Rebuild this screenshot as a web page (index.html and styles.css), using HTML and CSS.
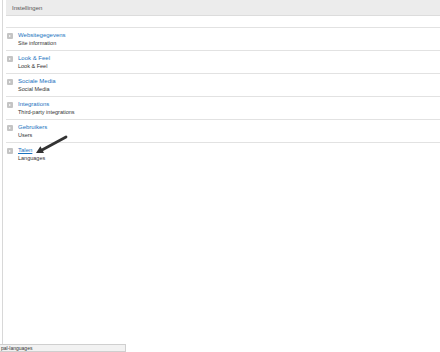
FILE: index.html
```html
<!DOCTYPE html>
<html lang="nl">
  <head>
    <meta charset="UTF-8" />
    <title>Instellingen</title>
    <link rel="stylesheet" href="styles.css">
  </head>
  <body>
    <div class="frame">
      <div class="content">
        <div class="kop">Instellingen</div>
        <ul class="lijst">
          <li class="item">
            <span class="pijl"></span>
            <div class="tekst">
              <a class="titel" href="#">Websitegegevens</a>
              <div class="sub">Site information</div>
            </div>
          </li>
          <li class="item">
            <span class="pijl"></span>
            <div class="tekst">
              <a class="titel" href="#">Look &amp; Feel</a>
              <div class="sub">Look &amp; Feel</div>
            </div>
          </li>
          <li class="item">
            <span class="pijl"></span>
            <div class="tekst">
              <a class="titel" href="#">Sociale Media</a>
              <div class="sub">Social Media</div>
            </div>
          </li>
          <li class="item">
            <span class="pijl"></span>
            <div class="tekst">
              <a class="titel" href="#">Integrations</a>
              <div class="sub">Third-party integrations</div>
            </div>
          </li>
          <li class="item">
            <span class="pijl"></span>
            <div class="tekst">
              <a class="titel" href="#">Gebruikers</a>
              <div class="sub">Users</div>
            </div>
          </li>
          <li class="item laatste">
            <span class="pijl"></span>
            <div class="tekst">
              <a class="titel actief" href="#">Talen</a>
              <div class="sub">Languages</div>
            </div>
          </li>
        </ul>
      </div>
    </div>

    <svg class="wijzer" width="36" height="22" viewBox="0 0 36 22">
      <line x1="32" y1="3" x2="8" y2="16" stroke="#333" stroke-width="2.8" stroke-linecap="round"/>
      <polygon points="2,19 6.4,12.2 10,19" fill="#333"/>
    </svg>

    <div class="status">pal-languages</div>
  </body>
</html>
```

FILE: styles.css
```css
html,
body {
  margin: 0;
  font-family: "Liberation Sans", Arial, sans-serif;
  font-size: 6px;
  color: #333;
  background: #fff;
}

.frame {
  margin-left: 2px;
  height: 345px;
  border-left: 1px solid #d8d8d8;
}

.content {
  margin-left: 3px;
}

.kop {
  height: 15px;
  line-height: 16px;
  padding-left: 6px;
  background-color: #ececec;
  border-bottom: 1px solid #dcdcdc;
  color: #555;
}

.lijst {
  list-style: none;
  margin: 11px 0 0 0;
  padding: 0;
  border-top: 1px solid #e2e2e2;
}

.item {
  display: flex;
  align-items: flex-start;
  height: 22px;
  border-bottom: 1px solid #e2e2e2;
  padding-left: 1px;
}

.item.laatste {
  border-bottom: none;
}

.pijl {
  position: relative;
  width: 6px;
  height: 6px;
  margin-top: 5px;
  margin-right: 5px;
  background-color: #c4c4c4;
  border-radius: 1px;
}

.pijl::after {
  content: "";
  position: absolute;
  left: 2px;
  top: 1.5px;
  border-left: 2px solid #fff;
  border-top: 1.5px solid transparent;
  border-bottom: 1.5px solid transparent;
}

.tekst {
  padding-top: 3px;
}

.titel {
  display: block;
  line-height: 8px;
  color: #1a73c0;
  text-decoration: none;
}

.titel.actief {
  text-decoration: underline;
}

.sub {
  line-height: 8px;
  font-size: 5.5px;
  color: #333;
}

.wijzer {
  position: absolute;
  left: 34px;
  top: 134px;
}

.status {
  position: fixed;
  left: 0;
  bottom: 0;
  width: 124px;
  height: 6px;
  line-height: 6px;
  padding-left: 1px;
  font-size: 5px;
  color: #333;
  background-color: #f2f2f2;
  border: 1px solid #cfcfcf;
  border-left: none;
}
```
